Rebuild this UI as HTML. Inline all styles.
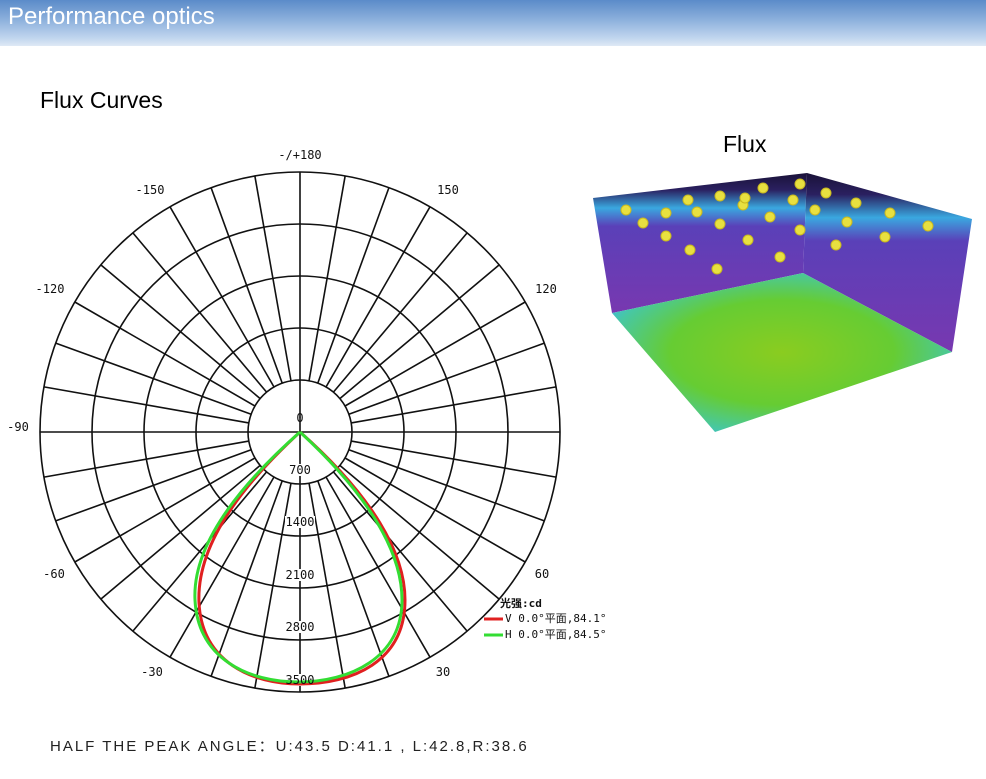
<!DOCTYPE html>
<html><head><meta charset="utf-8"><style>
body{margin:0;width:986px;height:779px;background:#fff;position:relative;overflow:hidden;font-family:"Liberation Sans",sans-serif}
.hdr{position:absolute;left:0;top:0;width:986px;height:46px;background:linear-gradient(#5b8bc9 0%,#8fb2dd 45%,#c4d8ef 85%,#dfe9f5 100%)}
.hdr span{position:absolute;left:8px;top:3px;font-size:24px;color:#fff}
.t{position:absolute;color:#000}
</style></head><body>
<div class="hdr"><span>Performance optics</span></div>
<div class="t" style="left:40px;top:87px;font-size:23px">Flux Curves</div>
<div class="t" style="left:723px;top:131px;font-size:23px">Flux</div>
<div class="t" style="left:50px;top:735px;font-size:15px;letter-spacing:2px;color:#222">HALF THE PEAK ANGLE：U:43.5 D:41.1 , L:42.8,R:38.6</div>
<svg width="986" height="779" style="position:absolute;left:0;top:0">
<defs>
<linearGradient id="lw" x1="0" y1="0" x2="0" y2="1"><stop offset="0" stop-color="#1a1238"/><stop offset=".12" stop-color="#2a2060"/><stop offset=".25" stop-color="#3aa8e0"/><stop offset=".38" stop-color="#5a40b8"/><stop offset="1" stop-color="#7838b0"/></linearGradient>
<radialGradient id="fl" cx=".5" cy=".5" r=".6"><stop offset="0" stop-color="#8acc20"/><stop offset=".55" stop-color="#66cc33"/><stop offset=".85" stop-color="#48c8a0"/><stop offset="1" stop-color="#40b8e8"/></radialGradient>
</defs>
<polygon points="593,198 807,173 803,273 612,313" fill="url(#lw)"/>
<polygon points="807,173 972,219 952,352 803,273" fill="url(#lw)"/>
<polygon points="612,313 803,273 952,352 715,432" fill="url(#fl)"/>
<g fill="#e8e040" stroke="#c8b820" stroke-width="1">
<circle cx="626" cy="210" r="5"/><circle cx="643" cy="223" r="5"/><circle cx="666" cy="213" r="5"/><circle cx="697" cy="212" r="5"/><circle cx="720" cy="196" r="5"/><circle cx="743" cy="205" r="5"/><circle cx="763" cy="188" r="5"/><circle cx="800" cy="184" r="5"/><circle cx="826" cy="193" r="5"/><circle cx="856" cy="203" r="5"/><circle cx="890" cy="213" r="5"/><circle cx="928" cy="226" r="5"/><circle cx="666" cy="236" r="5"/><circle cx="720" cy="224" r="5"/><circle cx="770" cy="217" r="5"/><circle cx="815" cy="210" r="5"/><circle cx="847" cy="222" r="5"/><circle cx="885" cy="237" r="5"/><circle cx="690" cy="250" r="5"/><circle cx="748" cy="240" r="5"/><circle cx="800" cy="230" r="5"/><circle cx="836" cy="245" r="5"/><circle cx="717" cy="269" r="5"/><circle cx="780" cy="257" r="5"/><circle cx="793" cy="200" r="5"/><circle cx="745" cy="198" r="5"/><circle cx="688" cy="200" r="5"/>
</g>
<g stroke="#111" stroke-width="1.6" fill="none">
<circle cx="300" cy="432" r="52"/><circle cx="300" cy="432" r="104"/><circle cx="300" cy="432" r="156"/><circle cx="300" cy="432" r="208"/><circle cx="300" cy="432" r="260"/>
<line x1="40" y1="432" x2="560" y2="432"/><line x1="300" y1="172" x2="300" y2="692"/>
<g transform="translate(300,432)">
<line x1="52" y1="0" x2="260" y2="0" transform="rotate(10)"/><line x1="52" y1="0" x2="260" y2="0" transform="rotate(20)"/><line x1="52" y1="0" x2="260" y2="0" transform="rotate(30)"/><line x1="52" y1="0" x2="260" y2="0" transform="rotate(40)"/><line x1="52" y1="0" x2="260" y2="0" transform="rotate(50)"/><line x1="52" y1="0" x2="260" y2="0" transform="rotate(60)"/><line x1="52" y1="0" x2="260" y2="0" transform="rotate(70)"/><line x1="52" y1="0" x2="260" y2="0" transform="rotate(80)"/>
<line x1="52" y1="0" x2="260" y2="0" transform="rotate(100)"/><line x1="52" y1="0" x2="260" y2="0" transform="rotate(110)"/><line x1="52" y1="0" x2="260" y2="0" transform="rotate(120)"/><line x1="52" y1="0" x2="260" y2="0" transform="rotate(130)"/><line x1="52" y1="0" x2="260" y2="0" transform="rotate(140)"/><line x1="52" y1="0" x2="260" y2="0" transform="rotate(150)"/><line x1="52" y1="0" x2="260" y2="0" transform="rotate(160)"/><line x1="52" y1="0" x2="260" y2="0" transform="rotate(170)"/>
<line x1="52" y1="0" x2="260" y2="0" transform="rotate(190)"/><line x1="52" y1="0" x2="260" y2="0" transform="rotate(200)"/><line x1="52" y1="0" x2="260" y2="0" transform="rotate(210)"/><line x1="52" y1="0" x2="260" y2="0" transform="rotate(220)"/><line x1="52" y1="0" x2="260" y2="0" transform="rotate(230)"/><line x1="52" y1="0" x2="260" y2="0" transform="rotate(240)"/><line x1="52" y1="0" x2="260" y2="0" transform="rotate(250)"/><line x1="52" y1="0" x2="260" y2="0" transform="rotate(260)"/>
<line x1="52" y1="0" x2="260" y2="0" transform="rotate(280)"/><line x1="52" y1="0" x2="260" y2="0" transform="rotate(290)"/><line x1="52" y1="0" x2="260" y2="0" transform="rotate(300)"/><line x1="52" y1="0" x2="260" y2="0" transform="rotate(310)"/><line x1="52" y1="0" x2="260" y2="0" transform="rotate(320)"/><line x1="52" y1="0" x2="260" y2="0" transform="rotate(330)"/><line x1="52" y1="0" x2="260" y2="0" transform="rotate(340)"/><line x1="52" y1="0" x2="260" y2="0" transform="rotate(350)"/>
</g></g>
<g fill="#fff"><rect x="289" y="464" width="22" height="12"/><rect x="285" y="516" width="30" height="12"/><rect x="285" y="569" width="30" height="12"/><rect x="285" y="621" width="30" height="12"/><rect x="285" y="674" width="30" height="12"/></g>
<path d="M300,432 C250,478 196,540 199,603 C202,662 252,684 300,684 C352,684 405,662 405,600 C405,540 352,478 300,432" fill="none" stroke="#e02020" stroke-width="3"/>
<path d="M300,432 C248,478 192,540 195,600 C198,660 250,682 298,682 C350,682 402,658 402,600 C402,540 350,478 300,432" fill="none" stroke="#33dd33" stroke-width="3"/>
<g font-family="DejaVu Sans Mono,Liberation Mono,monospace" font-size="12" fill="#111" text-anchor="middle">
<text x="300" y="159">-/+180</text><text x="150" y="194">-150</text><text x="448" y="194">150</text>
<text x="50" y="293">-120</text><text x="546" y="293">120</text><text x="18" y="431">-90</text>
<text x="54" y="578">-60</text><text x="542" y="578">60</text><text x="152" y="676">-30</text><text x="443" y="676">30</text>
<text x="300" y="422">0</text><text x="300" y="474">700</text><text x="300" y="526">1400</text><text x="300" y="579">2100</text><text x="300" y="631">2800</text><text x="300" y="684">3500</text>
</g>
<g font-family="DejaVu Sans Mono,'Noto Sans CJK SC',monospace" font-size="11" fill="#111">
<text x="500" y="607" font-weight="bold">光强:cd</text>
<text x="505" y="622">V 0.0°平面,84.1°</text>
<text x="505" y="638">H 0.0°平面,84.5°</text>
</g>
<line x1="484" y1="619" x2="503" y2="619" stroke="#e02020" stroke-width="3"/>
<line x1="484" y1="635" x2="503" y2="635" stroke="#33dd33" stroke-width="3"/>
</svg>
</body></html>
